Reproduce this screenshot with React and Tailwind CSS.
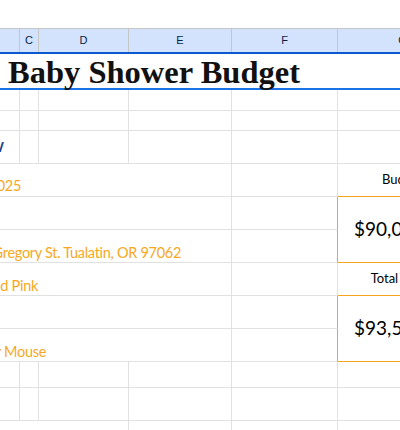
import React from 'react';

const LINE = 'border-r border-b border-[#e1e1e1]';
const COLS = 'grid grid-cols-[20px_19px_90px_103px_106px_130px] w-[468px]';

// text whose start runs off the left edge of the sheet, anchored at its right end
const Spill = ({ end, className, children }) => (
  <div className={`${end} shrink-0 flex justify-end whitespace-nowrap ${className}`}>{children}</div>
);

const Merged = ({ end, pad = 'pb-[2px]', children }) => (
  <div className={`col-span-4 flex items-end ${pad} ${LINE}`}>
    {children && (
      <Spill end={end} className="text-[14.5px] tracking-[-0.3px] leading-none text-[#f6a823]">
        {children}
      </Spill>
    )}
  </div>
);

const PlainRow = () => (
  <>
    <div className={LINE}></div>
    <div className={LINE}></div>
    <div className={LINE}></div>
    <div className={LINE}></div>
    <div className={LINE}></div>
    <div className={LINE}></div>
  </>
);

const App = () => {
  return (
    <div className="w-[400px] h-[430px] overflow-hidden bg-white font-['Lato',sans-serif] text-black">
      {/* toolbar gap */}
      <div className="h-[28px]"></div>

      {/* Column headers */}
      <div className={`${COLS} h-[26px] bg-[#d3e3fd] border-t border-t-[#c4c7c5] border-b-2 border-b-[#0b57d0] font-['Liberation_Sans',sans-serif] text-[11px] text-[#041e49]`}>
        {['', 'C', 'D', 'E', 'F', 'G'].map((c) => (
          <div key={c} className="flex items-center justify-center border-r border-[#c4c7c5]">
            {c}
          </div>
        ))}
      </div>

      {/* Title */}
      <div className="h-[36px] border-b-2 border-[#1a73e8] flex items-end pl-[8px]">
        <span className="font-['Liberation_Serif',serif] font-bold text-[32.5px] leading-none text-[#111] whitespace-nowrap">
          Baby Shower Budget
        </span>
      </div>

      {/* Sheet body */}
      <div className={`${COLS} grid-rows-[21px_20px_33px_33px_33px_33px_33px_33px_33px_26px_33px_33px]`}>
        <PlainRow />
        <PlainRow />

        {/* row with heading */}
        <div className={`flex items-center ${LINE}`}>
          <Spill end="w-[4px]" className="text-[14px] font-bold leading-none text-[#1c4587]">
            OVERVIEW
          </Spill>
        </div>
        <div className={LINE}></div>
        <div className={LINE}></div>
        <div className={LINE}></div>
        <div className={LINE}></div>
        <div className={LINE}></div>

        {/* date / budget label */}
        <Merged end="w-[21px]" pad="pb-[3px]">May 17, 2025</Merged>
        <div className={LINE}></div>
        <div className="flex items-center justify-center text-[13px] border-r border-b border-r-[#e1e1e1] border-b-[#f4a41d]">
          Budget
        </div>

        <Merged />
        <div className="border-r border-b border-b-[#e1e1e1] border-r-[#f4a41d]"></div>
        <div className="row-span-2 flex items-center justify-center text-[19px] border-r border-b border-[#f4a41d]">
          $90,000.00
        </div>

        <Merged end="w-[181px]">12345 SW Gregory St. Tualatin, OR 97062</Merged>
        <div className="border-r border-b border-b-[#e1e1e1] border-r-[#f4a41d]"></div>

        <Merged end="w-[38px]">Blue and Pink</Merged>
        <div className={LINE}></div>
        <div className="flex items-center justify-center text-[13px] border-r border-b border-r-[#e1e1e1] border-b-[#f4a41d]">
          Total Spent
        </div>

        <Merged />
        <div className="border-r border-b border-b-[#e1e1e1] border-r-[#f4a41d]"></div>
        <div className="row-span-2 flex items-center justify-center text-[19px] border-r border-b border-[#f4a41d]">
          $93,500.00
        </div>

        <Merged end="w-[46px]">Mickey Mouse</Merged>
        <div className="border-r border-b border-b-[#e1e1e1] border-r-[#f4a41d]"></div>

        <PlainRow />
        <PlainRow />

        <div className={`col-span-3 ${LINE}`}></div>
        <div className={LINE}></div>
        <div className={LINE}></div>
        <div className={LINE}></div>
      </div>
    </div>
  );
};

export default App;
